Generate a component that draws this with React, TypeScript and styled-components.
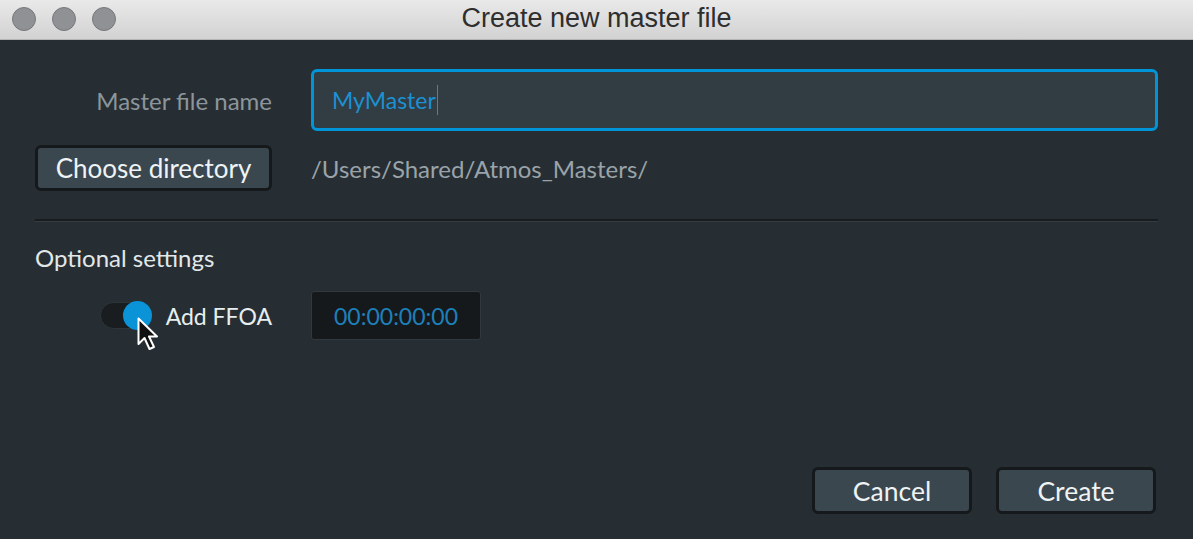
import React from 'react';
import styled, { createGlobalStyle } from 'styled-components';

const GlobalStyle = createGlobalStyle`
  html, body {
    margin: 0;
    padding: 0;
    background: #262e33;
  }
  * {
    box-sizing: border-box;
  }
`;

export default function App() {
  return (
    <>
      <GlobalStyle />
      <Window>
        <TitleBar>
          <Lights>
            <Light />
            <Light />
            <Light />
          </Lights>
          <Title>Create new master file</Title>
        </TitleBar>
        <Body>
          <FormRow>
            <Label>Master file name</Label>
            <NameInput>
              MyMaster
              <Caret />
            </NameInput>
          </FormRow>
          <FormRow $tight>
            <Button $wide>Choose directory</Button>
            <PathText>/Users/Shared/Atmos_Masters/</PathText>
          </FormRow>
          <Separator />
          <SectionTitle>Optional settings</SectionTitle>
          <FormRow $option>
            <ToggleWrap>
              <Toggle>
                <Knob />
                <Pointer viewBox="0 0 22 34">
                  <path
                    d="M1.5 1.5 L1.5 27 L7.5 21 L12.5 32 L17 30 L12 19.5 L20 19.5 Z"
                    fill="#111"
                    stroke="#fff"
                    strokeWidth="2"
                    strokeLinejoin="round"
                  />
                </Pointer>
              </Toggle>
              <ToggleLabel>Add FFOA</ToggleLabel>
            </ToggleWrap>
            <Timecode>00:00:00:00</Timecode>
          </FormRow>
          <Spacer />
          <Footer>
            <Button>Cancel</Button>
            <Button>Create</Button>
          </Footer>
        </Body>
      </Window>
    </>
  );
}

const Window = styled.div`
  width: 1193px;
  height: 539px;
  display: flex;
  flex-direction: column;
  background: #262e33;
  font-family: Lato, 'Noto Sans', sans-serif;
  overflow: hidden;
`;

const TitleBar = styled.div`
  height: 40px;
  flex-shrink: 0;
  position: relative;
  display: flex;
  align-items: center;
  justify-content: center;
  background: linear-gradient(#e9e9e9, #d2d2d2);
  border-bottom: 1px solid #b4b4b4;
`;

const Lights = styled.div`
  position: absolute;
  left: 12px;
  top: 7px;
  display: flex;
  gap: 16px;
`;

const Light = styled.div`
  width: 24px;
  height: 24px;
  border-radius: 50%;
  background: #8f9195;
  border: 1px solid #76787c;
`;

const Title = styled.div`
  font-family: 'Liberation Sans', Arial, sans-serif;
  font-size: 27px;
  color: #2e2e2e;
  margin-top: -2px;
`;

const Body = styled.div`
  flex: 1;
  display: flex;
  flex-direction: column;
  padding: 29px 35px 25px 35px;
`;

const FormRow = styled.div<{ $tight?: boolean; $option?: boolean }>`
  display: grid;
  grid-template-columns: 237px 1fr;
  column-gap: 39px;
  align-items: center;
  margin-top: ${(p) => (p.$tight ? '14px' : p.$option ? '19px' : '0')};
`;

const Label = styled.div`
  text-align: right;
  font-size: 24px;
  color: #8c959b;
`;

const NameInput = styled.div`
  height: 62px;
  display: flex;
  align-items: center;
  padding-left: 18px;
  border: 3px solid #0095d8;
  border-radius: 6px;
  background: #323c43;
  font-size: 23px;
  color: #1b91d2;
`;

const Caret = styled.span`
  display: inline-block;
  width: 1px;
  height: 30px;
  background: #1b91d2;
  margin-left: 1px;
`;

const Button = styled.div<{ $wide?: boolean }>`
  height: ${(p) => (p.$wide ? '46px' : '47px')};
  width: ${(p) => (p.$wide ? '237px' : '160px')};
  display: flex;
  align-items: center;
  justify-content: center;
  background: #3b474f;
  border: 3px solid #15191b;
  border-radius: 6px;
  font-size: ${(p) => (p.$wide ? '26px' : '26.5px')};
  color: #eef3f5;
`;

const PathText = styled.div`
  font-size: 24px;
  color: #9aa3a9;
`;

const Separator = styled.div`
  margin-top: 28px;
  height: 3px;
  border-top: 2px solid #181c1e;
  border-bottom: 1px solid #333d43;
`;

const SectionTitle = styled.div`
  margin-top: 21px;
  font-size: 24px;
  color: #e2e8ea;
`;

const ToggleWrap = styled.div`
  display: flex;
  align-items: center;
  justify-content: flex-end;
  gap: 15px;
`;

const Toggle = styled.div`
  position: relative;
  width: 51px;
  height: 27px;
  border-radius: 14px;
  background: #191d1f;
  border: 1px solid #2c3539;
`;

const Knob = styled.div`
  position: absolute;
  right: -2px;
  top: -2px;
  width: 29px;
  height: 29px;
  border-radius: 50%;
  background: #0a93d6;
`;

const Pointer = styled.svg`
  position: absolute;
  left: 36px;
  top: 14px;
  width: 22px;
  height: 34px;
`;

const ToggleLabel = styled.div`
  font-size: 23px;
  color: #e8eef0;
`;

const Timecode = styled.div`
  width: 170px;
  height: 49px;
  display: flex;
  align-items: center;
  justify-content: center;
  background: #16191b;
  border: 1px solid #2f393f;
  border-radius: 3px;
  font-size: 23px;
  color: #1d80ba;
`;

const Spacer = styled.div`
  flex: 1;
`;

const Footer = styled.div`
  display: flex;
  justify-content: flex-end;
  gap: 24px;
  padding-right: 2px;
`;
